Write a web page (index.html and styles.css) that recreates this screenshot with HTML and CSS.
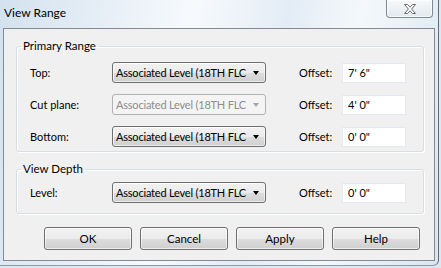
FILE: index.html
```html
<!DOCTYPE html>
<html lang="en">
<head>
    <meta charset="UTF-8">
    <meta name="viewport" content="width=device-width, initial-scale=1.0">
    <title>View Range</title>
    <link rel="stylesheet" href="styles.css">
</head>
<body>
    <div class="window">
        <div class="titlebar">
            <span class="title">View Range</span>
            <div class="close-btn">
                <svg width="12" height="10" viewBox="0 0 12 10">
                    <path d="M0.5 0.5 H3.5 L6 3.2 L8.5 0.5 H11.5 L7.6 5 L11.5 9.5 H8.5 L6 6.8 L3.5 9.5 H0.5 L4.4 5 Z" fill="#fff" stroke="#6b6b6b" stroke-width="1"/>
                </svg>
            </div>
        </div>

        <div class="client">
            <fieldset class="group">
                <legend>Primary Range</legend>
                <div class="rows first">
                    <div class="row">
                        <span class="label">Top:</span>
                        <div class="combo"><span class="combo-text">Associated Level (18TH FLC</span><span class="arrow"></span></div>
                        <span class="offset-label">Offset:</span>
                        <div class="textbox">7' 6"</div>
                    </div>
                    <div class="row">
                        <span class="label">Cut plane:</span>
                        <div class="combo disabled"><span class="combo-text">Associated Level (18TH FLC</span><span class="arrow"></span></div>
                        <span class="offset-label">Offset:</span>
                        <div class="textbox">4' 0"</div>
                    </div>
                    <div class="row">
                        <span class="label">Bottom:</span>
                        <div class="combo"><span class="combo-text">Associated Level (18TH FLC</span><span class="arrow"></span></div>
                        <span class="offset-label">Offset:</span>
                        <div class="textbox">0' 0"</div>
                    </div>
                </div>
            </fieldset>

            <fieldset class="group depth">
                <legend>View Depth</legend>
                <div class="rows second">
                    <div class="row">
                        <span class="label">Level:</span>
                        <div class="combo"><span class="combo-text">Associated Level (18TH FLC</span><span class="arrow"></span></div>
                        <span class="offset-label">Offset:</span>
                        <div class="textbox">0' 0"</div>
                    </div>
                </div>
            </fieldset>

            <div class="buttons">
                <button class="btn">OK</button>
                <button class="btn">Cancel</button>
                <button class="btn">Apply</button>
                <button class="btn">Help</button>
            </div>
        </div>
    </div>
</body>
</html>
```

FILE: styles.css
```css
body {
    margin: 0;
    font-family: "Segoe UI", Lato, sans-serif;
    font-size: 11px;
    color: #000;
    background-color: #dfe6ee;
}
.window {
    width: 439px;
    height: 266px;
    box-sizing: border-box;
    border-right: 1px solid #5f6e7e;
    border-bottom: 1px solid #8a9aab;
    border-bottom-right-radius: 6px;
    background: linear-gradient(100deg, #d3e2ef 0%, #e9f0f7 25%, #f7fafd 40%, #e3ecf5 60%, #f4f8fb 75%, #d9e6f1 100%);
}
.titlebar {
    height: 28px;
    display: flex;
    justify-content: space-between;
    align-items: flex-start;
}
.title {
    font-size: 12px;
    line-height: 16px;
    padding: 5px 0 0 4px;
}
.close-btn {
    width: 45px;
    height: 17px;
    margin-right: 5px;
    border: 1px solid #7d8a97;
    border-top: none;
    border-radius: 0 0 4px 4px;
    background: linear-gradient(#f6f8fa, #e4e9ef);
    box-shadow: inset 0 0 0 1px rgba(255, 255, 255, 0.7);
    display: flex;
    align-items: center;
    justify-content: center;
}
.client {
    margin-left: 3px;
    width: 432px;
    height: 233px;
    box-sizing: border-box;
    border: 1px solid #848a91;
    background-color: #f0f0f0;
    padding: 9px 10px 0 12px;
}
.group {
    margin: 0;
    padding: 0 0 4px 0;
    min-width: 0;
    border: 1px solid #d5dfe5;
    border-radius: 3px;
    box-shadow: inset 1px 1px 0 #fff, 1px 1px 0 #fff;
}
.group legend {
    margin-left: 4px;
    padding: 0 2px;
    font-size: 11.5px;
    line-height: 16px;
}
.group.depth {
    margin-top: 9px;
    padding-bottom: 10px;
}
.rows {
    display: flex;
    flex-direction: column;
    gap: 11px;
    padding-left: 13px;
}
.rows.first {
    padding-top: 8px;
}
.rows.second {
    padding-top: 5px;
}
.row {
    display: flex;
    align-items: center;
    height: 21px;
}
.label {
    width: 82px;
}
.combo {
    width: 154px;
    height: 21px;
    box-sizing: border-box;
    border: 1px solid #707070;
    border-radius: 3px;
    background: linear-gradient(#f2f2f2 0%, #ebebeb 50%, #dddddd 51%, #cfcfcf 100%);
    box-shadow: inset 0 0 0 1px rgba(255, 255, 255, 0.6);
    display: flex;
    align-items: center;
    padding-left: 3px;
}
.combo-text {
    white-space: nowrap;
    letter-spacing: -0.2px;
}
.arrow {
    width: 0;
    height: 0;
    margin: 0 6px 0 auto;
    border-left: 3.5px solid transparent;
    border-right: 3.5px solid transparent;
    border-top: 4px solid #000;
}
.combo.disabled {
    border-color: #adb2b5;
    background: #f4f4f4;
    box-shadow: none;
    color: #8d8d8d;
}
.combo.disabled .arrow {
    border-top-color: #a5a5a5;
}
.offset-label {
    margin-left: 33px;
    width: 43px;
}
.textbox {
    width: 64px;
    height: 20px;
    box-sizing: border-box;
    border: 1px solid #e3e9ef;
    background-color: #fff;
    padding-left: 5px;
    line-height: 18px;
}
.buttons {
    display: flex;
    gap: 8px;
    margin-top: 13px;
    padding-left: 28px;
}
.btn {
    width: 88px;
    height: 23px;
    font-family: inherit;
    font-size: 11.5px;
    color: #000;
    border: 1px solid #707070;
    border-radius: 3px;
    background: linear-gradient(#f2f2f2 0%, #ebebeb 50%, #dddddd 51%, #cfcfcf 100%);
    box-shadow: inset 0 0 0 1px rgba(255, 255, 255, 0.6);
    padding: 0;
}
```
